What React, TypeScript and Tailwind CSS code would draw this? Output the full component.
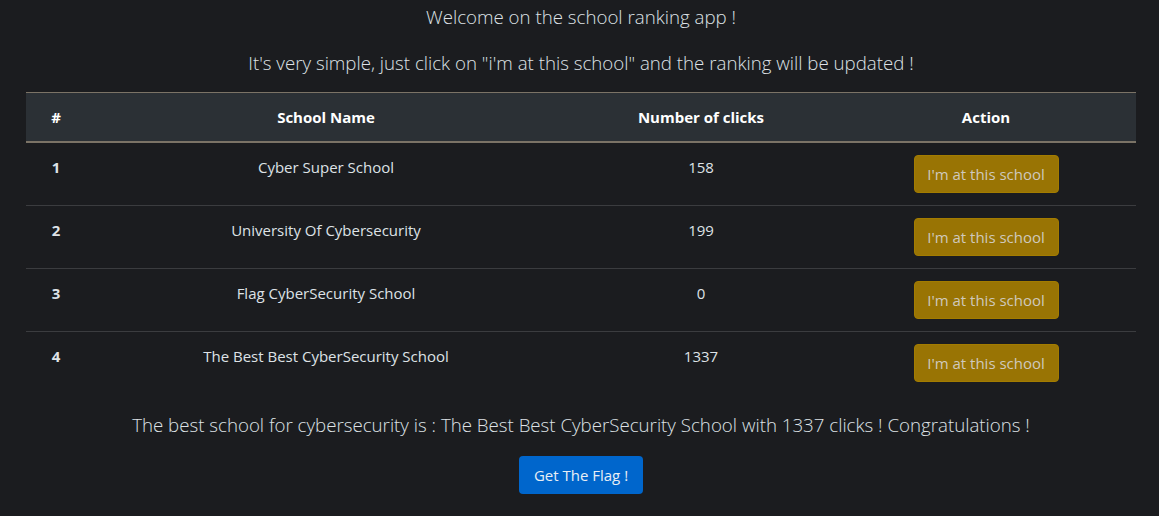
import React from "react";

const schools = [
  { id: 1, name: "Cyber Super School", clicks: 158 },
  { id: 2, name: "University Of Cybersecurity", clicks: 199 },
  { id: 3, name: "Flag CyberSecurity School", clicks: 0 },
  { id: 4, name: "The Best Best CyberSecurity School", clicks: 1337 },
];

const App: React.FC = () => {
  return (
    <div
      className="min-h-[516px] bg-[#1b1c1f] text-[#dee2e6]"
      style={{ fontFamily: '"Open Sans", "Noto Sans", sans-serif' }}
    >
      <div className="ml-[26px] w-[1110px] pt-[2px] text-center">
        <p className="mb-4 text-[18.7px] font-light leading-[30px]">
          Welcome on the school ranking app !
        </p>
        <p className="mb-[14px] text-[18.7px] font-light leading-[30px]">
          It's very simple, just click on "i'm at this school" and the ranking will be updated !
        </p>

        <table className="mb-4 w-full table-fixed border-collapse text-[15px]">
          <colgroup>
            <col className="w-[60px]" />
            <col className="w-[480px]" />
            <col className="w-[270px]" />
            <col className="w-[300px]" />
          </colgroup>
          <thead>
            <tr className="border-t border-b-2 border-t-[#7b7366] border-b-[#7b7366] bg-[#2b3035] text-white">
              <th className="px-2 py-3 leading-6 font-bold">#</th>
              <th className="px-2 py-3 leading-6 font-bold">School Name</th>
              <th className="px-2 py-3 leading-6 font-bold">Number of clicks</th>
              <th className="px-2 py-3 leading-6 font-bold">Action</th>
            </tr>
          </thead>
          <tbody>
            {schools.map((s, i) => (
              <tr
                key={s.id}
                className={i < schools.length - 1 ? "border-b border-[#3b3c3f]" : ""}
              >
                <td className="px-2 py-3 align-top font-bold leading-6">{s.id}</td>
                <td className="px-2 py-3 align-top leading-6">{s.name}</td>
                <td className="px-2 py-3 align-top leading-6">{s.clicks}</td>
                <td className="px-2 py-3 align-top leading-6">
                  <button className="h-[38px] w-[145px] rounded-[4px] border border-[#a37c00] bg-[#997404] text-[15px] text-[#cfc9bd]">
                    I'm at this school
                  </button>
                </td>
              </tr>
            ))}
          </tbody>
        </table>

        <p className="mb-4 text-[18.7px] font-light leading-[30px]">
          The best school for cybersecurity is : The Best Best CyberSecurity School with 1337 clicks ! Congratulations !
        </p>
        <button className="h-[38px] w-[124px] rounded-[4px] bg-[#0066cc] text-[15px] text-[#e8eef5]">
          Get The Flag !
        </button>
      </div>
    </div>
  );
};

export default App;
